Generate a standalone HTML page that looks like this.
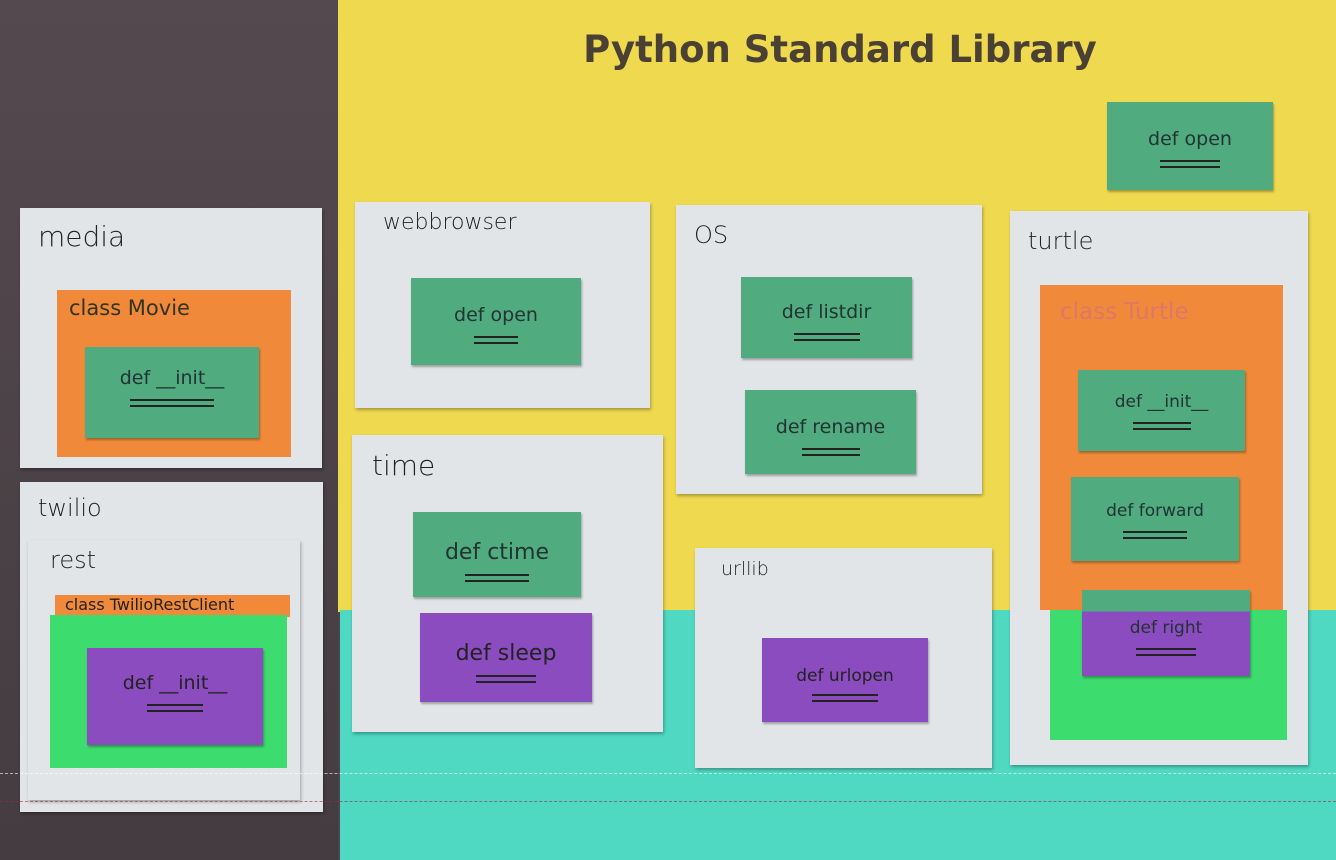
<!DOCTYPE html>
<html><head><style>
body{margin:0;width:1336px;height:860px;overflow:hidden;position:relative;background:#4c4448;font-family:"DejaVu Sans","Liberation Sans",sans-serif}
div{position:absolute;box-sizing:border-box}
.w{background:#e2e5e7;box-shadow:1px 2px 3px rgba(0,0,0,.3)}
.g{background:#50ab7f;box-shadow:1px 2px 2px rgba(0,0,0,.3);color:#233;text-align:center;font-size:19px}
.p{background:#8a4cbf;box-shadow:1px 2px 2px rgba(0,0,0,.3);color:#222;text-align:center;font-size:19px}
.o{background:#f08a3a}
.l{font-size:28px;color:#222;font-weight:300}
.u{position:absolute;left:50%;transform:translateX(-50%);border-top:2px solid #222;border-bottom:2px solid #222;height:4px}
</style></head><body>
<div style="left:0;top:0;width:338px;height:860px;background:linear-gradient(#54494f,#443c40)"></div>
<div style="left:338px;top:0;width:998px;height:612px;background:#efd94f"></div>
<div style="left:340px;top:610px;width:996px;height:250px;background:#4fd8c2"></div>
<div style="left:0;width:1336px;text-align:center;padding-left:344px;top:28px;font-family:'DejaVu Sans',sans-serif;font-weight:bold;font-size:37px;color:#4a4134">Python Standard Library</div>

<div class="g" style="left:1107px;top:102px;width:166px;height:88px;padding-top:26px">def open<span class="u" style="top:58px;width:60px"></span></div>

<div class="w" style="left:20px;top:208px;width:302px;height:260px"><div class="l" style="left:18px;top:12px">media</div></div>
<div class="o" style="left:57px;top:290px;width:234px;height:167px"><div style="left:12px;top:6px;font-size:21px;color:#332">class Movie</div></div>
<div class="g" style="left:85px;top:347px;width:174px;height:91px;padding-top:20px">def __init__<span class="u" style="top:52px;width:84px"></span></div>

<div class="w" style="left:20px;top:482px;width:303px;height:330px"><div class="l" style="left:18px;top:12px;font-size:24px">twilio</div></div>
<div class="w" style="left:28px;top:540px;width:272px;height:260px"><div class="l" style="left:22px;top:6px;font-size:24px">rest</div></div>
<div class="o" style="left:55px;top:595px;width:235px;height:22px;font-size:16px;padding-left:10px;color:#222">class TwilioRestClient</div>
<div style="left:50px;top:615px;width:237px;height:153px;background:#3ddc6e"></div>
<div class="p" style="left:87px;top:648px;width:176px;height:97px;padding-top:24px">def __init__<span class="u" style="top:56px;width:56px"></span></div>

<div class="w" style="left:355px;top:202px;width:295px;height:206px"><div class="l" style="left:28px;top:8px;font-size:22px">webbrowser</div></div>
<div class="g" style="left:411px;top:278px;width:170px;height:87px;padding-top:26px">def open<span class="u" style="top:58px;width:44px"></span></div>

<div class="w" style="left:352px;top:435px;width:311px;height:297px"><div class="l" style="left:20px;top:14px">time</div></div>
<div class="g" style="left:413px;top:512px;width:168px;height:85px;padding-top:28px;font-size:22px">def ctime<span class="u" style="top:62px;width:64px"></span></div>
<div class="p" style="left:420px;top:613px;width:172px;height:89px;padding-top:28px;font-size:22px">def sleep<span class="u" style="top:62px;width:60px"></span></div>

<div class="w" style="left:676px;top:205px;width:306px;height:289px"><div class="l" style="left:18px;top:16px;font-size:24px">OS</div></div>
<div class="g" style="left:741px;top:277px;width:171px;height:81px;padding-top:24px">def listdir<span class="u" style="top:56px;width:66px"></span></div>
<div class="g" style="left:745px;top:390px;width:171px;height:84px;padding-top:26px">def rename<span class="u" style="top:58px;width:58px"></span></div>

<div class="w" style="left:695px;top:548px;width:297px;height:220px"><div class="l" style="left:26px;top:10px;font-size:19px">urllib</div></div>
<div class="p" style="left:762px;top:638px;width:166px;height:84px;padding-top:28px;font-size:17px">def urlopen<span class="u" style="top:56px;width:66px"></span></div>

<div class="w" style="left:1010px;top:211px;width:298px;height:554px"><div class="l" style="left:18px;top:16px;font-size:24px">turtle</div></div>
<div class="o" style="left:1040px;top:285px;width:243px;height:325px"><div style="left:20px;top:14px;font-size:23px;color:#d76">class Turtle</div></div>
<div style="left:1050px;top:610px;width:237px;height:130px;background:#3ddc6e"></div>
<div class="g" style="left:1078px;top:370px;width:167px;height:81px;padding-top:22px;font-size:17px">def __init__<span class="u" style="top:52px;width:58px"></span></div>
<div class="g" style="left:1071px;top:477px;width:168px;height:84px;padding-top:24px;font-size:17px">def forward<span class="u" style="top:54px;width:64px"></span></div>
<div class="g" style="left:1082px;top:590px;width:168px;height:86px;padding-top:28px;font-size:17px;background:linear-gradient(#50ab7f 0,#50ab7f 25%,#8a4cbf 25%)">def right<span class="u" style="top:58px;width:60px"></span></div>

<div style="left:0;top:773px;width:1336px;border-top:1px dashed rgba(255,255,255,.6)"></div>
<div style="left:0;top:801px;width:1336px;border-top:1px dashed rgba(160,40,60,.6)"></div>
</body></html>
